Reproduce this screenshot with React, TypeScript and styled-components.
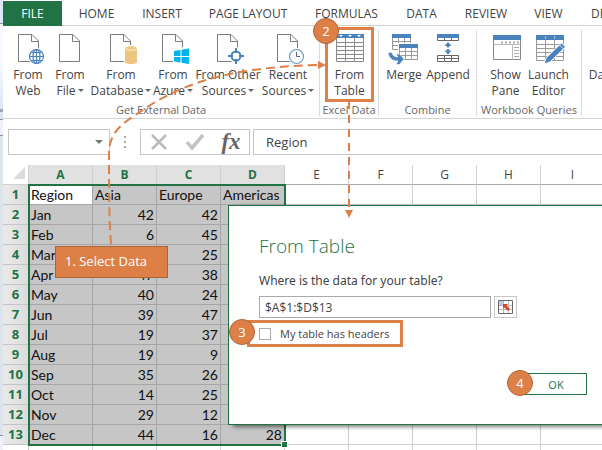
import React, { ReactNode } from "react";
import styled, { createGlobalStyle, css } from "styled-components";

const GREEN = "#217346";
const ORANGE = "#dd8047";
const BLUE = "#4a82bd";
const UI = `"Open Sans", "Noto Sans", sans-serif`;
const CELL = `"Lato", "Open Sans", sans-serif`;

const Global = createGlobalStyle`
  * { box-sizing: border-box; }
  body { margin: 0; background: #fff; font-family: ${UI}; font-size: 12px; color: #444; }
  button, input { font: inherit; color: inherit; margin: 0; padding: 0; border: 0; background: none; border-radius: 0; }
`;

const Window = styled.div`
  position: relative;
  display: grid;
  grid-template-columns: 3px minmax(0, 1fr);
  height: 100vh;
  overflow: hidden;
`;
const Backdrop = styled.div`
  background: linear-gradient(#dfe8f8 0 23px, #8494ac 23px 24px, #f8fbff 24px 60px, #dde6f2 109px, #a4aab4 109px 112px, #dfe4ec 112px 119px, #8494ac 119px 120px, #eef2f8 120px 135px, #8494ac 135px 136px, #dde4ec 136px 435px, #8494ac 435px 436px, #eef2f8 436px);
`;
const Main = styled.main`
  min-width: 0;
`;
const Tabs = styled.nav`
  display: flex;
  height: 26px;
  padding-top: 1px;
  border-bottom: 1px solid #d4d4d4;
`;
const Tab = styled.button<{ $w: number; $file?: boolean }>`
  flex: none;
  width: ${(p) => p.$w}px;
  height: 25px;
  white-space: nowrap;
  ${(p) => p.$file && css`
    background: ${GREEN};
    color: #fff;
  `}
`;
const Ribbon = styled.div`
  display: flex;
  height: 93px;
  padding-top: 4px;
  border-bottom: 1px solid #d4d4d4;
`;
const Group = styled.section<{ $w: number }>`
  flex: none;
  display: flex;
  flex-direction: column;
  justify-content: space-between;
  width: ${(p) => p.$w}px;
  height: 86px;
  border-right: 1px solid #dcdcdc;
`;
const Tools = styled.div<{ $start: number }>`
  display: flex;
  padding-left: ${(p) => p.$start}px;
`;
const Tool = styled.button<{ $w: number }>`
  flex: none;
  display: flex;
  flex-direction: column;
  align-items: center;
  width: ${(p) => p.$w}px;
  padding-top: 2px;
  line-height: 16px;
  white-space: nowrap;
  svg { display: block; margin-bottom: 2px; overflow: visible; }
`;
const GroupName = styled.div`
  text-align: center;
  font-size: 11px;
  line-height: 12px;
  white-space: nowrap;
  color: #666;
`;
const Caret = styled.span`
  display: inline-block;
  margin-left: 2px;
  vertical-align: 3px;
  border: 3px solid transparent;
  border-top-color: #666;
  border-bottom: 0;
`;
const Highlighted = styled.div`
  position: relative;
`;
const Outline = styled.div`
  position: absolute;
  inset: -3px 0;
  border: 3px solid ${ORANGE};
  pointer-events: none;
`;
const Step = styled.span<{ $x: number; $y: number }>`
  position: absolute;
  z-index: 4;
  left: ${(p) => p.$x}px;
  top: ${(p) => p.$y}px;
  display: grid;
  place-items: center;
  width: 26px;
  height: 26px;
  border: 1px solid #ad6335;
  border-radius: 50%;
  background: ${ORANGE};
  color: #fff;
  font-size: 13px;
`;

const FormulaBar = styled.div`
  display: flex;
  align-items: center;
  padding: 10px 0 10px 5px;
  height: 46px;
`;
const NameBox = styled.button`
  display: flex;
  align-items: center;
  justify-content: flex-end;
  width: 102px;
  height: 26px;
  padding-right: 6px;
  border: 1px solid #c6c6c6;
`;
const Down = styled.span`
  border: 4px solid transparent;
  border-top-color: #777;
  border-bottom: 0;
`;
const Dots = styled.span`
  display: grid;
  gap: 3px;
  width: 2px;
  margin: 0 14px;
  i { height: 2px; background: #aaa; }
`;
const FormulaTools = styled.div`
  display: flex;
  align-items: center;
  width: 110px;
  height: 26px;
  border: 1px solid #c6c6c6;
  button { flex: 1; display: grid; place-items: center; }
`;
const Fx = styled.button`
  font-family: "Liberation Serif", serif;
  font-size: 23px;
  font-style: italic;
  font-weight: 700;
  line-height: 22px;
  color: #666;
`;
const FormulaInput = styled.input`
  flex: 1;
  min-width: 0;
  height: 26px;
  margin-left: 3px;
  padding-left: 12px;
  border: 1px solid #c6c6c6;
  border-right: 0;
  font-size: 13px;
`;

const SheetArea = styled.div`
  position: relative;
`;
const Sheet = styled.table`
  table-layout: fixed;
  width: 602px;
  border-collapse: separate;
  border-spacing: 0;
  font-family: ${CELL};
  font-size: 14px;
  color: #111;
`;
const ColHead = styled.th<{ $on?: boolean }>`
  height: 20px;
  padding: 0;
  border-right: 1px solid #d0d0d0;
  border-bottom: 1px solid #ababab;
  font-family: ${UI};
  font-size: 12px;
  line-height: 18px;
  font-weight: ${(p) => (p.$on ? 700 : 400)};
  color: ${(p) => (p.$on ? GREEN : "#444")};
  background: ${(p) => (p.$on ? "#e1e1e1" : "#fff")};
`;
const Corner = styled.td`
  padding: 0 3px 3px 0;
  border-right: 1px solid #d0d0d0;
  border-bottom: 1px solid #d0d0d0;
  svg { display: block; margin-left: auto; }
`;
const RowHead = styled.th<{ $on?: boolean }>`
  height: 20px;
  padding: 0;
  border-right: 1px solid #c6c6c6;
  border-bottom: 1px solid #c6c6c6;
  background: ${(p) => (p.$on ? "linear-gradient(90deg, #eaeaea, #dcdcdc)" : "#fff")};
  color: ${GREEN};
  font-family: ${UI};
  font-size: 13px;
  font-weight: 700;
  line-height: 19px;
`;
const Cell = styled.td<{ $on?: boolean; $num?: boolean; $active?: boolean }>`
  height: 20px;
  padding: 0 2px;
  line-height: 19px;
  white-space: nowrap;
  border-right: 1px solid ${(p) => (p.$on ? "#a6a6a6" : "#d0d0d0")};
  border-bottom: 1px solid ${(p) => (p.$on ? "#a6a6a6" : "#d0d0d0")};
  background: ${(p) => (p.$on && !p.$active ? "#c6c6c6" : "#fff")};
  text-align: ${(p) => (p.$num ? "right" : "left")};
`;
const Selection = styled.div`
  position: absolute;
  left: 25px;
  top: 19px;
  width: 258px;
  height: 262px;
  border: 2px solid ${GREEN};
`;
const FillHandle = styled.i`
  position: absolute;
  right: -3px;
  bottom: -3px;
  width: 5px;
  height: 5px;
  background: ${GREEN};
  outline: 1px solid #fff;
`;

const Dialog = styled.form`
  position: absolute;
  z-index: 2;
  left: 228px;
  right: 0;
  top: 205px;
  height: 220px;
  padding: 26px 15px 0 30px;
  border: 1px solid ${GREEN};
  border-right: 0;
  background: #fff;
  box-shadow: 5px 2px 4px rgba(0, 0, 0, 0.5);
`;
const Title = styled.h1`
  margin: 0 0 13px;
  font-size: 19px;
  line-height: 28px;
  font-weight: 300;
  color: ${GREEN};
`;
const Question = styled.label`
  display: block;
  margin-bottom: 7px;
  line-height: 16px;
  font-family: "Noto Sans", sans-serif;
  font-size: 12px;
`;
const RangeRow = styled.div`
  display: flex;
  gap: 3px;
  input {
    width: 232px;
    height: 22px;
    padding-left: 5px;
    border: 1px solid #ababab;
  }
  button {
    display: grid;
    place-items: center;
    width: 23px;
    height: 22px;
    border: 1px solid #c6c6c6;
  }
`;
const HeadersCheck = styled.label`
  position: relative;
  display: flex;
  align-items: center;
  gap: 9px;
  width: 156px;
  height: 27px;
  margin: 2px 0 0 -12px;
  padding-left: 9px;
  border: 3px solid ${ORANGE};
  font-size: 11px;
  white-space: nowrap;
  input {
    appearance: none;
    width: 12px;
    height: 12px;
    border: 1px solid #ababab;
  }
`;
const Actions = styled.div`
  display: flex;
  justify-content: flex-end;
  margin-top: 26px;
`;
const OkButton = styled.button`
  position: relative;
  width: 67px;
  height: 22px;
  padding-left: 5px;
  border: 1px solid ${GREEN};
  color: ${GREEN};
  font-size: 11px;
`;
const Callout = styled.div`
  position: absolute;
  z-index: 4;
  left: 55px;
  top: 246px;
  width: 113px;
  height: 32px;
  padding-left: 9px;
  border: 1px solid #ad6335;
  background: ${ORANGE};
  color: #fff;
  font-size: 13px;
  line-height: 28px;
  white-space: nowrap;
`;
const Arrows = styled.svg`
  position: absolute;
  z-index: 3;
  left: 0;
  top: 0;
  pointer-events: none;
`;

const Icon = ({ children, w = 32, shift = 0 }: { children?: ReactNode; w?: number; shift?: number }) => (
  <svg width={w} height="33" viewBox={`${-shift} 0 ${w} 33`} fill="none" aria-hidden="true">{children}</svg>
);
const Page = () => (
  <path d="M3.5 2.5H17L23.5 9V29.5H3.5ZM16.5 2.5V9.5H23.5" stroke="#7d7d7d" fill="#fff" />
);
const WebIcon = () => (
  <Icon shift={3}><Page />
    <circle cx="21.5" cy="24.5" r="8.5" fill="#fff" />
    <g stroke={BLUE} strokeWidth="1.2"><circle cx="21.5" cy="24.5" r="7" /><ellipse cx="21.5" cy="24.5" rx="3.5" ry="7" /><path d="M21.5 17.5V31.5M14.5 24.5H28.5M16 20.5H27M16 28.5H27" /></g>
  </Icon>
);
const FileIcon = () => <Icon w={28}><Page /></Icon>;
const DatabaseIcon = () => (
  <Icon shift={2}><Page /><path d="M17 13H31V33H17Z" fill="#fff" />
    <path d="M18 16V30C18 32.7 30 32.7 30 30V16Z" fill="#edc77f" /><ellipse cx="24" cy="16" rx="6" ry="2.2" fill="#edc77f" stroke="#fff" strokeWidth=".7" />
  </Icon>
);
const AzureIcon = () => (
  <Icon shift={2}><Page /><path d="M14 17L31 14V33L14 31Z" fill="#fff" />
    <path d="M15 19L21.5 18V24H15ZM22.5 17.8L30 16.5V24H22.5ZM15 25H21.5V30.5L15 29.5ZM22.5 25H30V32L22.5 30.7Z" fill="#00b3ee" />
  </Icon>
);
const OtherIcon = () => (
  <Icon shift={2}><Page /><path d="M22 14L32 24L22 34L12 24Z" fill="#fff" />
    <circle cx="22" cy="24" r="4.5" stroke={BLUE} strokeWidth="2" /><path d="M22 16V21M22 27V32M14 24H19M25 24H30" stroke={BLUE} strokeWidth="2" />
  </Icon>
);
const RecentIcon = () => (
  <Icon shift={2}><Page /><circle cx="22.5" cy="24.5" r="8.5" fill="#fff" />
    <circle cx="22.5" cy="24.5" r="7" stroke="#6f9bcb" strokeWidth="1.2" /><path d="M22.5 20V24.5H26" stroke="#666" />
  </Icon>
);
const TableIcon = () => (
  <Icon>
    <path d="M2.5 5.5H29.5V29.5H2.5ZM2.5 10.5H29.5M2.5 14.5H29.5M2.5 18.5H29.5M2.5 22.5H29.5M2.5 26.5H29.5M11.5 6V29.5M20.5 6V29.5" stroke="#8a8a8a" />
    <path d="M2 2H30V6H2Z" fill={BLUE} /><path d="M5 3H9L7 5ZM14 3H18L16 5ZM23 3H27L25 5Z" fill="#fff" />
  </Icon>
);
const MergeIcon = () => (
  <Icon>
    <path d="M4.5 3.5H22.5V17.5H4.5ZM4.5 9.5H22.5M4.5 13.5H22.5M10.5 5V17.5M16.5 5V17.5" stroke="#999" />
    <path d="M4 2H23V6H4Z" fill={BLUE} />
    <path d="M10 11H31V29H10Z" fill="#fff" />
    <path d="M11.5 13.5H29.5V27.5H11.5ZM11.5 19.5H29.5M11.5 23.5H29.5M17.5 16V27.5M23.5 16V27.5" stroke="#999" />
    <path d="M11 12H30V16H11Z" fill={BLUE} />
    <path d="M0 20.5L4 20.5C4.500 23.500 6.500 25 10 25L8 22H11.500L16 27L11.500 32.500H8L10 29C4 29 1 26 0 20.500Z" fill={BLUE} stroke="#fff" strokeWidth=".6" />
  </Icon>
);
const AppendIcon = () => (
  <Icon>
    <path d="M5.5 3.5H26.5V8.5H5.5ZM12.5 5V8.5M19.5 5V8.5M5.5 23.5H26.5V29.5H5.5ZM5.5 26.5H26.5M12.5 23.5V29.5M19.5 23.5V29.5" stroke="#666" />
    <path d="M5 2H27V6H5Z" fill={BLUE} /><path d="M16 10L19.500 14H17V15.500H15V14H12.500ZM16 22.500L19.500 18.500H17V17H15V18.500H12.500Z" fill={BLUE} />
  </Icon>
);
const PaneIcon = () => (
  <Icon>
    <path d="M3.5 3.500H30.500V27.500H3.500Z" stroke="#888" /><path d="M22.500 13V27.500M3.500 12.500H30.500" stroke="#bbb" />
    <path d="M3 3H31V8H3Z" fill={BLUE} /><path d="M11 10.500H29" stroke="#aaa" strokeWidth="2" strokeDasharray="2 2" />
    <path d="M24 15.500H29M24 18.500H29M24 21.500H29M24 24.500H29" stroke="#aaa" />
  </Icon>
);
const EditorIcon = () => (
  <Icon>
    <path d="M3.5 3.500H30.500V28.500H3.500ZM3.500 12.500H30.500M3.500 16.500H30.500M3.500 20.500H30.500M3.500 24.500H30.500M12.500 7V28.500M21.500 7V28.500" stroke="#999" />
    <path d="M3 3H31V8H3Z" fill={BLUE} /><path d="M12.500 4V7M21.500 4V7" stroke="#9fc0e0" />
    <path d="M11 32L13 26L28.500 11L32.500 15L17 30Z" fill={BLUE} stroke="#fff" /><path d="M26.500 13L30.500 17" stroke="#fff" strokeWidth=".8" />
  </Icon>
);
const RangeIcon = () => (
  <svg width="15" height="14" viewBox="0 0 15 14" fill="none" aria-hidden="true">
    <path d="M1 1H6V5H1Z" fill="#b5cdea" />
    <path d="M1 5.500H14M1 9.500H14M5.500 1V13M10.500 1V13" stroke="#bbb" />
    <path d="M.5 .5H14.500V13.500H.5Z" stroke="#666" />
    <path d="M5 4H10L8.500 5.500L12 9L10 11L6.500 7.500L5 9Z" fill="#d24726" />
  </svg>
);

const getData: [ReactNode, string, string, number, boolean][] = [
  [<WebIcon />, "From", "Web", 42, false],
  [<FileIcon />, "From", "File", 42, true],
  [<DatabaseIcon />, "From", "Database", 60, true],
  [<AzureIcon />, "From", "Azure", 44, true],
  [<OtherIcon />, "From Other", "Sources", 66, true],
  [<RecentIcon />, "Recent", "Sources", 54, true],
];
type Value = number | null;
const rows: [string, Value, Value, Value][] = [
  ["Jan", 42, 42, null], ["Feb", 6, 45, null], ["Mar", null, 25, null], ["Apr", 47, 38, null],
  ["May", 40, 24, null], ["Jun", 39, 47, null], ["Jul", 19, 37, null], ["Aug", 19, 9, null],
  ["Sep", 35, 26, null], ["Oct", 14, 25, null], ["Nov", 29, 12, null], ["Dec", 44, 16, 28],
];
const columns = "ABCDEFGHI".split("");
const emptyColumns = columns.slice(4);

const RibbonTool = ({ icon, a, b, w, menu }: { icon: ReactNode; a: string; b?: string; w: number; menu?: boolean }) => (
  <Tool type="button" $w={w}>
    {icon}
    <span>{a}</span>
    {b && <span>{b}{menu && <Caret />}</span>}
  </Tool>
);

export default function App() {
  return (
    <Window>
      <Global />
      <Backdrop />
      <Main>
        <Tabs>
          <Tab $w={59} $file>FILE</Tab>
          <Tab $w={69}>HOME</Tab>
          <Tab $w={62}>INSERT</Tab>
          <Tab $w={110}>PAGE LAYOUT</Tab>
          <Tab $w={87}>FORMULAS</Tab>
          <Tab $w={63}>DATA</Tab>
          <Tab $w={66}>REVIEW</Tab>
          <Tab $w={59}>VIEW</Tab>
          <Tab $w={92}>DEVELOPER</Tab>
        </Tabs>
        <Ribbon>
          <Group $w={317}>
            <Tools $start={4}>{getData.map(([icon, a, b, w, menu]) => <RibbonTool key={b + a + w} icon={icon} a={a} b={b} w={w} menu={menu} />)}</Tools>
            <GroupName>Get External Data</GroupName>
          </Group>
          <Group $w={59}>
            <Tools $start={5}>
              <Highlighted>
                <RibbonTool icon={<TableIcon />} a="From" b="Table" w={49} />
                <Outline><Step $x={-15} $y={-12}>2</Step></Outline>
              </Highlighted>
            </Tools>
            <GroupName>Excel Data</GroupName>
          </Group>
          <Group $w={98}>
            <Tools $start={3}>
              <RibbonTool icon={<MergeIcon />} a="Merge" w={44} />
              <RibbonTool icon={<AppendIcon />} a="Append" w={44} />
            </Tools>
            <GroupName>Combine</GroupName>
          </Group>
          <Group $w={105}>
            <Tools $start={7}>
              <RibbonTool icon={<PaneIcon />} a="Show" b="Pane" w={43} />
              <RibbonTool icon={<EditorIcon />} a="Launch" b="Editor" w={43} />
            </Tools>
            <GroupName>Workbook Queries</GroupName>
          </Group>
          <Group $w={70}>
            <Tools $start={0}><RibbonTool icon={<Icon />} a="Data" w={40} /></Tools>
          </Group>
        </Ribbon>
        <FormulaBar>
          <NameBox aria-label="Name box"><Down /></NameBox>
          <Dots><i /><i /><i /></Dots>
          <FormulaTools>
            <button aria-label="Cancel"><svg width="18" height="18" viewBox="0 0 18 18"><path d="M2 2L16 16M16 2L2 16" stroke="#bbb" strokeWidth="2.5" /></svg></button>
            <button aria-label="Enter"><svg width="20" height="18" viewBox="0 0 20 18"><path d="M2 9L7 15L18 2" stroke="#c4c4c4" strokeWidth="3.5" fill="none" /></svg></button>
            <Fx aria-label="Insert function">fx</Fx>
          </FormulaTools>
          <FormulaInput aria-label="Formula" defaultValue="Region" />
        </FormulaBar>
        <SheetArea>
          <Sheet>
            <colgroup><col width="26" />{columns.map((c) => <col key={c} width="64" />)}</colgroup>
            <thead>
              <tr>
                <Corner><svg width="12" height="12"><path d="M12 0V12H0Z" fill="#dcdcdc" /></svg></Corner>
                {columns.map((c, i) => <ColHead key={c} $on={i < 4}>{c}</ColHead>)}
              </tr>
            </thead>
            <tbody>
              <tr>
                <RowHead $on>1</RowHead>
                {["Region", "Asia", "Europe", "Americas"].map((t, i) => <Cell key={t} $on $active={i === 0}>{t}</Cell>)}
                {emptyColumns.map((c) => <Cell key={c} />)}
              </tr>
              {rows.map(([m, ...v], r) => (
                <tr key={m}>
                  <RowHead $on>{r + 2}</RowHead>
                  <Cell $on>{m}</Cell>
                  {v.map((n, i) => <Cell key={i} $on $num>{n}</Cell>)}
                  {emptyColumns.map((c) => <Cell key={c} />)}
                </tr>
              ))}
              <tr>
                <RowHead />
                {columns.map((c) => <Cell key={c} />)}
              </tr>
            </tbody>
          </Sheet>
          <Selection><FillHandle /></Selection>
        </SheetArea>
      </Main>
      <Dialog onSubmit={(e) => e.preventDefault()}>
        <Title>From Table</Title>
        <Question htmlFor="range">Where is the data for your table?</Question>
        <RangeRow>
          <input id="range" defaultValue="$A$1:$D$13" />
          <button type="button" aria-label="Select range"><RangeIcon /></button>
        </RangeRow>
        <HeadersCheck>
          <input type="checkbox" />My table has headers
          <Step $x={-21} $y={-4}>3</Step>
        </HeadersCheck>
        <Actions><OkButton>OK<Step $x={-14} $y={-4}>4</Step></OkButton></Actions>
      </Dialog>
      <Callout>1. Select Data</Callout>
      <Arrows width="602" height="450" viewBox="0 0 602 450" fill="none" aria-hidden="true">
        <path d="M111 244C109 220 109 185 109 154C109 128 127 121 152 104C198 76 250 67 317 65" stroke={ORANGE} strokeWidth="2" strokeDasharray="9 5" />
        <path d="M318 61L326 65L318 69Z" fill={ORANGE} />
        <path d="M349 101V207" stroke={ORANGE} strokeWidth="2" strokeDasharray="8 6" />
        <path d="M345 210H353L349 218Z" fill={ORANGE} />
      </Arrows>
    </Window>
  );
}
